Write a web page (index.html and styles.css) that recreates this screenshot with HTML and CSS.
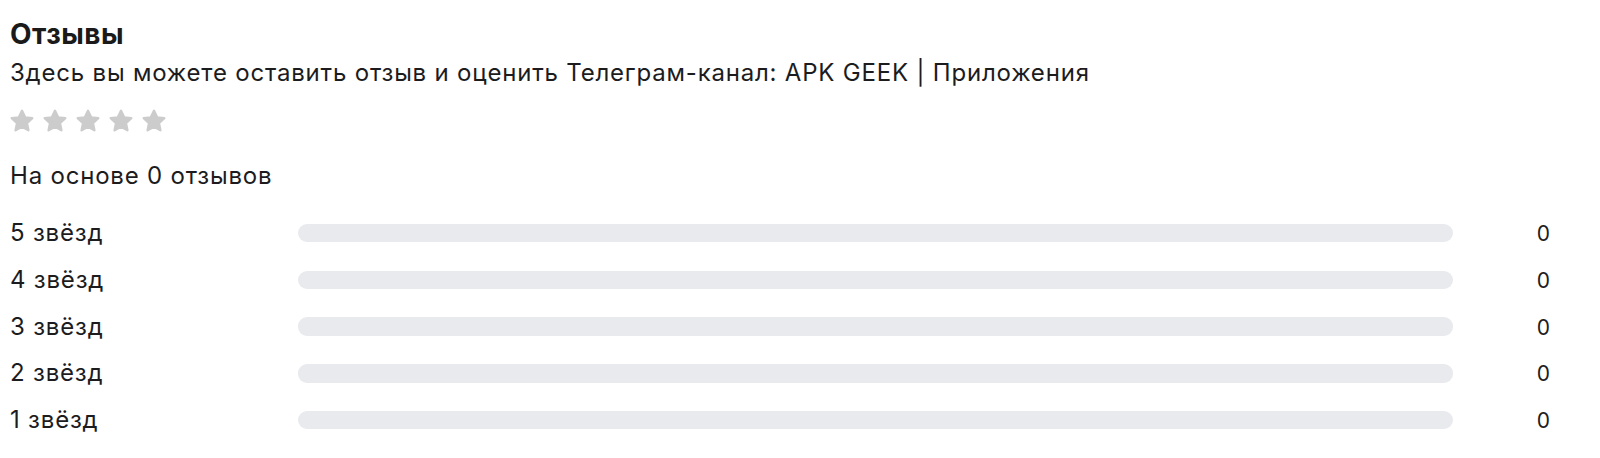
FILE: index.html
```html
<!DOCTYPE html>
<html lang="ru">
<head>
<meta charset="utf-8">
<title>Отзывы</title>
<link rel="stylesheet" href="styles.css">
</head>
<body>
<section class="reviews">
  <h2 class="reviews__title">Отзывы</h2>
  <p class="reviews__desc">Здесь вы можете оставить отзыв и оценить Телеграм-канал: APK GEEK | Приложения</p>
  <div class="stars">
    <svg class="star" viewBox="0 0 24 24"><path d="M12 2.5l2.9 6.1 6.6.8-4.9 4.6 1.3 6.6L12 17.3l-5.9 3.3 1.3-6.6-4.9-4.6 6.6-.8z"/></svg>
    <svg class="star" viewBox="0 0 24 24"><path d="M12 2.5l2.9 6.1 6.6.8-4.9 4.6 1.3 6.6L12 17.3l-5.9 3.3 1.3-6.6-4.9-4.6 6.6-.8z"/></svg>
    <svg class="star" viewBox="0 0 24 24"><path d="M12 2.5l2.9 6.1 6.6.8-4.9 4.6 1.3 6.6L12 17.3l-5.9 3.3 1.3-6.6-4.9-4.6 6.6-.8z"/></svg>
    <svg class="star" viewBox="0 0 24 24"><path d="M12 2.5l2.9 6.1 6.6.8-4.9 4.6 1.3 6.6L12 17.3l-5.9 3.3 1.3-6.6-4.9-4.6 6.6-.8z"/></svg>
    <svg class="star" viewBox="0 0 24 24"><path d="M12 2.5l2.9 6.1 6.6.8-4.9 4.6 1.3 6.6L12 17.3l-5.9 3.3 1.3-6.6-4.9-4.6 6.6-.8z"/></svg>
  </div>
  <p class="reviews__count">На основе 0 отзывов</p>
  <div class="dist">
    <div class="dist__row"><span class="dist__label">5 звёзд</span><span class="dist__bar"></span><span class="dist__num">0</span></div>
    <div class="dist__row"><span class="dist__label">4 звёзд</span><span class="dist__bar"></span><span class="dist__num">0</span></div>
    <div class="dist__row"><span class="dist__label">3 звёзд</span><span class="dist__bar"></span><span class="dist__num">0</span></div>
    <div class="dist__row"><span class="dist__label">2 звёзд</span><span class="dist__bar"></span><span class="dist__num">0</span></div>
    <div class="dist__row"><span class="dist__label">1 звёзд</span><span class="dist__bar"></span><span class="dist__num">0</span></div>
  </div>
</section>
</body>
</html>
```
FILE: styles.css
```css
* { box-sizing: border-box; }
html, body { margin: 0; padding: 0; background: #fff; }
body {
  font-family: Inter, "Noto Sans", sans-serif;
  color: #1c1c1e;
}
.reviews {
  padding: 18px 50px 0 10px;
}
.reviews__title {
  margin: 0;
  font-size: 28px;
  line-height: 32px;
  font-weight: 700;
  letter-spacing: 0.5px;
  color: #1a1a1a;
}
.reviews__desc {
  margin: 7px 0 0;
  font-size: 24px;
  line-height: 32px;
  letter-spacing: 0.8px;
}
.stars {
  display: flex;
  gap: 7px;
  margin: 19px 0 0 -1px;
  height: 22px;
}
.star {
  width: 26px;
  height: 26px;
  margin-top: 0;
  fill: #cccccc;
  stroke: #cccccc;
  stroke-width: 2.2;
  stroke-linejoin: round;
}
.reviews__count {
  margin: 30px 0 0;
  font-size: 24px;
  line-height: 32px;
  letter-spacing: 0.8px;
}
.dist {
  margin-top: 24px;
  display: flex;
  flex-direction: column;
  gap: 14.75px;
}
.dist__row {
  display: grid;
  grid-template-columns: 288px 1fr 97px;
  align-items: center;
  height: 32px;
}
.dist__label {
  font-size: 24px;
  line-height: 32px;
  letter-spacing: 0.8px;
}
.dist__bar {
  display: block;
  height: 18.5px;
  border-radius: 9px;
  background: #e9eaee;
}
.dist__num {
  text-align: right;
  font-size: 21px;
  line-height: 32px;
  padding-top: 2px;
}
```
